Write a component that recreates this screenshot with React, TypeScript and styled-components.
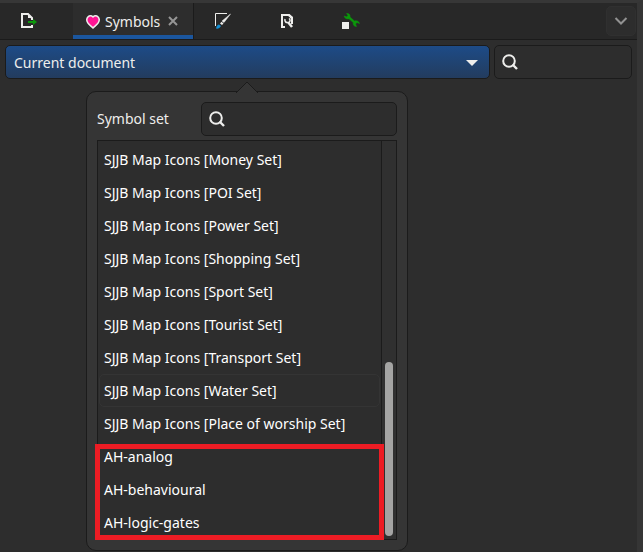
import React, { useState } from "react";
import styled, { createGlobalStyle } from "styled-components";

const line = "#1b1b1b";
const panel = "#2d2d2d";
const raised = "#353535";

const GlobalStyle = createGlobalStyle`
  *, *::before, *::after { box-sizing: border-box; }
  body {
    margin: 0;
    background: ${panel};
    color: #eeeeec;
    font: 14px/20px "Noto Sans", "Open Sans", sans-serif;
  }
  button, input { font: inherit; color: inherit; }
  svg { display: block; flex: none; }
`;

const Dock = styled.div`
  min-height: 100vh;
  background: ${panel};
  border-top: 3px solid #373737;
  border-right: 6px solid ${raised};
`;

const TabBar = styled.div`
  display: flex;
  align-items: stretch;
  height: 37px;
  background: #282828;
  border-bottom: 1px solid ${line};
`;

const Tabs = styled.div`
  display: flex;
  flex: 1;
`;

const Tab = styled.button<{ $first?: boolean }>`
  display: flex;
  align-items: center;
  justify-content: center;
  width: ${(p) => (p.$first ? 73 : 64)}px;
  padding: 0 ${(p) => (p.$first ? 16 : 4)}px 0 0;
  border: 0;
  background: none;
`;

const ActiveTab = styled.div`
  display: flex;
  align-items: center;
  width: 120px;
  padding-left: 13px;
  background: ${panel};
  box-shadow: inset 0 -4px #1b569e, 1px 0 ${line};
`;

const TabLabel = styled.button`
  display: flex;
  align-items: center;
  gap: 5px;
  padding: 1px 0 0;
  border: 0;
  background: none;
`;

const CloseButton = styled.button`
  display: flex;
  margin-left: 4px;
  padding: 4px;
  border: 0;
  background: none;
`;

const MoreButton = styled.button`
  display: flex;
  align-items: center;
  justify-content: center;
  width: 30px;
  margin: 3px 1px;
  padding: 0;
  border: 1px solid #303030;
  border-radius: 5px;
  background: ${panel};
`;

const Toolbar = styled.div`
  display: flex;
  gap: 4px;
  padding: 5px;
`;

const SetPicker = styled.div`
  position: relative;
  flex: 1;
`;

const PickerButton = styled.button`
  display: flex;
  align-items: center;
  justify-content: space-between;
  width: 100%;
  height: 34px;
  padding: 1px 11px 0 8px;
  border: 1px solid ${line};
  border-radius: 5px;
  background: linear-gradient(#1d4b87, #233c5e);
`;

const SearchBox = styled.label<{ $wide?: boolean }>`
  display: flex;
  align-items: center;
  gap: 8px;
  width: ${(p) => (p.$wide ? 196 : 138)}px;
  height: 34px;
  padding: 0 7px;
  border: 1px solid ${line};
  border-radius: 5px;
  background: ${panel};
`;

const SearchInput = styled.input`
  flex: 1;
  min-width: 0;
  padding: 0;
  border: 0;
  outline: 0;
  background: none;
`;

const Popover = styled.div`
  position: absolute;
  top: 100%;
  left: 81px;
  width: 322px;
  margin-top: 12px;
  padding: 10px;
  border: 1px solid ${line};
  border-radius: 10px;
  background: ${raised};
`;

const PopoverArrow = styled.svg`
  position: absolute;
  bottom: 100%;
  left: 50%;
  margin: 0 0 -1px -11px;
`;

const PopoverHeader = styled.div`
  display: flex;
  align-items: center;
  justify-content: space-between;
  margin-bottom: 4px;
`;

const ListFrame = styled.div`
  display: flex;
  border: 1px solid ${line};
  background: ${panel};
`;

const SymbolList = styled.ul`
  flex: 1;
  margin: 0;
  padding: 2px 1px 0;
  list-style: none;
`;

const Option = styled.li<{ $hovered?: boolean }>`
  height: 33px;
  padding: 6px 4px;
  border: 1px solid ${(p) => (p.$hovered ? "#343434" : "transparent")};
  border-radius: 5px;
  color: #ffffff;
  white-space: nowrap;
  cursor: default;
`;

const Marked = styled.ul`
  position: relative;
  margin: 0;
  padding: 0;
  list-style: none;
  &::after {
    content: "";
    position: absolute;
    inset: 4px -4px -1px;
    border: 5px solid #ed1c24;
    pointer-events: none;
  }
`;

const ScrollTrack = styled.div`
  display: flex;
  align-items: flex-end;
  width: 15px;
  padding: 3px;
  border-left: 1px solid ${line};
  background: #303030;
`;

const ScrollThumb = styled.div`
  width: 8px;
  height: 174px;
  border-radius: 4px;
  background: #a4a4a3;
`;

const SearchIcon = () => (
  <svg width="16" height="16" viewBox="0 0 16 16" fill="none" stroke="#eeeeec" strokeWidth="2">
    <circle cx="7" cy="7" r="5.8" />
    <path d="M10.5 10.5 15 15" strokeWidth="2.4" />
  </svg>
);

const ExportIcon = () => (
  <svg width="16" height="16" viewBox="0 0 16 16">
    <path d="M11 7V5L7 1H1v13h10v-2" fill="none" stroke="#eeeeec" strokeWidth="2" />
    <path d="M7 1v4h4z" fill="#eeeeec" />
    <path d="M7 8h5V6l4 3-4 3v-2H7z" fill="#0b980b" />
  </svg>
);

const HeartIcon = () => (
  <svg width="14" height="14" viewBox="0 0 14 14">
    <path
      d="M7 2C5.5.4 3.400.5 2.100 1.800.6 3.300.6 5.900 1.800 7.800 3 9.700 5 11 7 13c2-2 4-3.300 5.200-5.200 1.200-1.900 1.200-4.500-.3-6C10.600.5 8.500.4 7 2z"
      fill="#ff1493"
      stroke="#eeeeec"
      strokeWidth="1.5"
    />
  </svg>
);

const BrushIcon = () => (
  <svg width="16" height="16" viewBox="0 0 16 16">
    <path d="M.5 13V.5H12" fill="none" stroke="#eeeeec" />
    <path d="M15.5 1 9 9.500 7 8z" fill="#eeeeec" stroke="#eeeeec" strokeWidth=".5" />
    <path d="m6.500 8.700 2 1.800-1.500 1.500-2-1.500z" fill="#eeeeec" />
    <path d="M4 11.500 6 13c-1 2-3 3-5 2.500.5-1 .5-3.500 3-4z" fill="#1290d6" />
  </svg>
);

const DocumentIcon = () => (
  <svg width="14" height="16" viewBox="0 0 14 16" fill="none" stroke="#eeeeec">
    <path d="M5 14H2V2h6.500L12 5v6" strokeWidth="2" />
    <path d="M8 1h1.500L13 4v2h-2z" fill="#eeeeec" stroke="none" />
    <path d="M5 6c-.5 2.500 1 4 3 3.500M9 5.500c1.300 1 1.500 2.500.3 3.500" strokeWidth="1.5" />
    <path d="m8 9 4 5" strokeWidth="2.5" />
  </svg>
);

const WrenchIcon = () => (
  <svg width="18" height="18" viewBox="0 0 18 18">
    <path
      d="M4.500 1.500C7 1 8.500 3 8 5l4.500 4c2-.8 4.500.2 5 2.500L15 10.500l-1.500 1.500 1 2.500c-2.500 0-3.800-2-3.300-4L7 6.800C4.500 7.500 2.300 6 2.200 4l2.500.8L6 3.500z"
      fill="#0b980b"
      stroke="#0b980b"
      strokeWidth=".5"
    />
    <path d="M0 10h7v7H0z" fill="#eeeeec" />
  </svg>
);

const sets = ["Money", "POI", "Power", "Shopping", "Sport", "Tourist", "Transport", "Water", "Place of worship"];
const ownSets = ["AH-analog", "AH-behavioural", "AH-logic-gates"];

export default function App() {
  const [open, setOpen] = useState(true);
  return (
    <>
      <GlobalStyle />
      <Dock>
        <TabBar>
          <Tabs>
            <Tab $first aria-label="Export"><ExportIcon /></Tab>
            <ActiveTab>
              <TabLabel aria-current="page"><HeartIcon />Symbols</TabLabel>
              <CloseButton aria-label="Close Symbols">
                <svg width="10" height="10" viewBox="0 0 10 10" stroke="#969696" strokeWidth="2">
                  <path d="m1 1 8 8M9 1 1 9" />
                </svg>
              </CloseButton>
            </ActiveTab>
            <Tab aria-label="Fill and stroke"><BrushIcon /></Tab>
            <Tab aria-label="Document properties"><DocumentIcon /></Tab>
            <Tab aria-label="Object properties"><WrenchIcon /></Tab>
          </Tabs>
          <MoreButton aria-label="More dialogs">
            <svg width="14" height="8" viewBox="0 0 14 8" fill="none" stroke="#929292" strokeWidth="2">
              <path d="m1.500 1 5.500 5.500L12.500 1" />
            </svg>
          </MoreButton>
        </TabBar>
        <Toolbar>
          <SetPicker>
            <PickerButton aria-haspopup="listbox" aria-expanded={open} onClick={() => setOpen(!open)}>
              Current document
              <svg width="12" height="6" viewBox="0 0 12 6"><path d="M0 0h12L6 6z" fill="#eeeeec" /></svg>
            </PickerButton>
            {open && (
              <Popover>
                <PopoverArrow width="22" height="12" viewBox="0 0 22 12">
                  <path d="M0 12 11 1l11 11" fill={raised} stroke={line} />
                </PopoverArrow>
                <PopoverHeader>
                  <span>Symbol set</span>
                  <SearchBox $wide>
                    <SearchIcon />
                    <SearchInput type="text" aria-label="Search symbol sets" />
                  </SearchBox>
                </PopoverHeader>
                <ListFrame>
                  <SymbolList aria-label="Symbol set">
                    {sets.map((name) => (
                      <Option key={name} $hovered={name === "Water"}>{`SJJB Map Icons [${name} Set]`}</Option>
                    ))}
                    <li>
                      <Marked>
                        {ownSets.map((name) => <Option key={name}>{name}</Option>)}
                      </Marked>
                    </li>
                  </SymbolList>
                  <ScrollTrack><ScrollThumb /></ScrollTrack>
                </ListFrame>
              </Popover>
            )}
          </SetPicker>
          <SearchBox>
            <SearchIcon />
            <SearchInput type="text" aria-label="Search symbols" />
          </SearchBox>
        </Toolbar>
      </Dock>
    </>
  );
}
